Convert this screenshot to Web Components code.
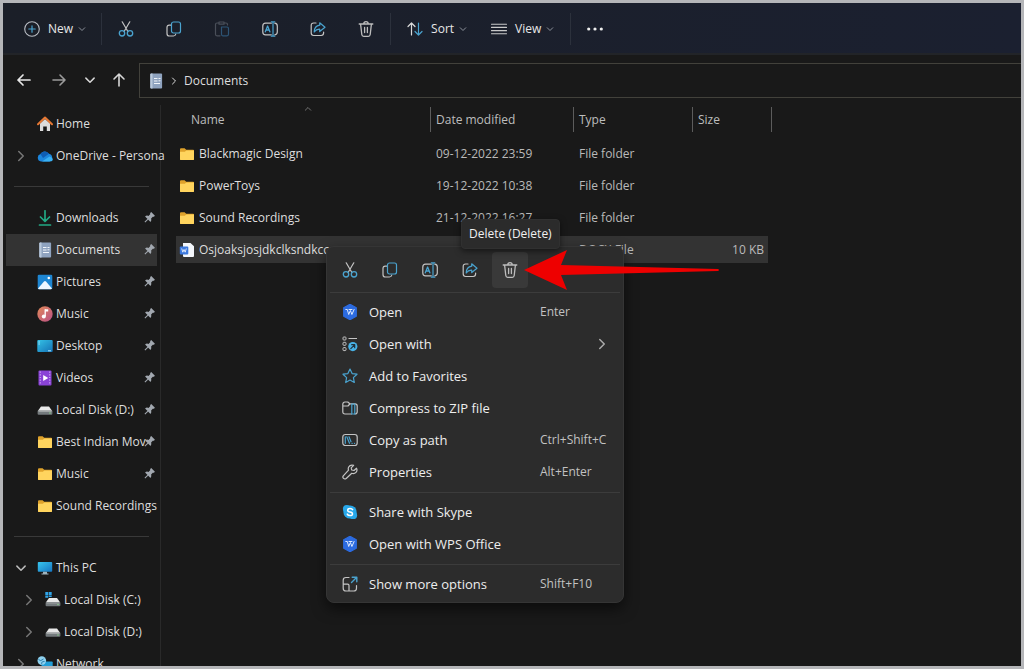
<!DOCTYPE html>
<html lang="en">
<head>
<meta charset="utf-8">
<title>Documents - File Explorer</title>
<style>
html, body { margin: 0; height: 100%; }
body { background: #b5b6b9; color: #dedede; font: 12px/16px "Open Sans", "Noto Sans", sans-serif; overflow: hidden; }
</style>
</head>
<body>
<file-explorer></file-explorer>
<script>
const INK = '#c4c4c4', BLUE = '#4aa3cf';
const folder = '<path d="M1 3.2q0-1 1-1h3.6l1.6 1.6h7q.8 0 .8.8v8.600q0 .8-.8.8H1.800q-.8 0-.8-.8z" fill="#dfa22b"/><path d="M1 5.800h4.800l1.600-1.300h7.600v8.700q0 .8-.8.8H1.800q-.8 0-.8-.8z" fill="#ffd45e"/>';
const drive = '<path d="M4 4.500h8l3.200 4.500H.8z" fill="#e8e8e8"/><rect x=".6" y="8.500" width="14.800" height="4.200" rx="1" fill="#747a7d"/><path d="M1.500 9.500h13" stroke="#b4b8b8" stroke-width=".7"/><circle cx="13" cy="11" r=".7" fill="#8be08b"/>';
const stroke = (d, c = INK, w = 1.2) => `<path d="${d}" fill="none" stroke="${c}" stroke-width="${w}" stroke-linecap="round" stroke-linejoin="round"/>`;
const wps = '<path d="M8 .3 14.300 3.700v8.600L8 15.700 1.700 12.300V3.700z" fill="#2c6be0" stroke="#2c6be0" stroke-width="1.200" stroke-linejoin="round"/>' + stroke('M3.800 5.500h1.500l1.400 5L8.400 6.500l1.500 4 2.200-5M7 5.500h3', '#dce9ff', 1);
const ICONS = {
  plus: '<circle cx="8" cy="8" r="7.300" fill="none" stroke="#b9bdc4" stroke-width="1.100"/>' + stroke('M8 4.800v6.400M4.800 8h6.400', BLUE),
  cut: stroke('M4.200 .8 9.900 10.500M11.800 .8 6.100 10.500') + `<circle cx="4" cy="12.300" r="2.700" fill="none" stroke="${BLUE}" stroke-width="1.300"/><circle cx="12" cy="12.300" r="2.700" fill="none" stroke="${BLUE}" stroke-width="1.300"/>`,
  copy: stroke('M4.700 4.200H3.200Q1 4.200 1 6.400v6Q1 15 3.400 15h4q2 0 2.400-2') + `<rect x="5.500" y="1" width="9" height="11" rx="2" fill="none" stroke="${BLUE}" stroke-width="1.200"/>`,
  paste: stroke('M6 14.800H3q-1.500 0-1.500-1.500V3.500Q1.500 2 3 2h1.500M10.500 2H12q1.500 0 1.500 1.500V4M5 1h5v2.200H5z', '#4a4f59') + stroke('M7.500 6h5.500q1.500 0 1.500 1.500v5.800q0 1.500-1.500 1.500H8.800q-1.300 0-1.300-1.500z', '#2d5475'),
  rename: stroke('M9.300 2.200H3.500Q.8 2.200.8 5v6q0 2.800 2.700 2.800h5.800M12.800 2.200q2.500.3 2.500 2.800v6q0 2.500-2.500 2.800') + stroke('M9.300 .8h3.500M9.300 15.200h3.500M11 .8v14.400', BLUE) + stroke('M3.300 10.800 5.600 5l2.300 5.800M4.200 9h3', BLUE, 1.3),
  share: stroke('M6 2H3.600Q1.200 2 1.200 4.400v7.700q0 2.400 2.400 2.400h7.600q2.400 0 2.400-2.400v-1') + stroke('M9.700 1.800 15 6.200l-5.300 4.300V8.200Q6.300 8 4.200 11 4.300 5 9.700 4.200z', BLUE),
  trash: stroke('M1.200 3h13.600M5.800 2.900Q5.800 .7 8 .7t2.200 2.200M2.600 3.200l1.200 10.300q.2 1.800 1.900 1.800h4.600q1.700 0 1.900-1.800l1.200-10.300M6.600 6.500v5M9.400 6.500v5', '#bdbdbd', 1.3),
  sort: stroke('M4.500 14V2M1 5.500 4.500 2 8 5.500', '#dadada') + stroke('M11.500 2v12M8 10.500l3.500 3.500 3.500-3.500', BLUE),
  view: stroke('M.5 3.200h15M.5 6.400h15M.5 9.600h15M.5 12.800h15', '#c9c9c9', 1.1),
  dots: '<g fill="#eee"><circle cx="1.700" cy="8" r="1.600"/><circle cx="8" cy="8" r="1.600"/><circle cx="14.300" cy="8" r="1.600"/></g>',
  down: stroke('M2.500 5.500 8 11l5.500-5.500', 'currentColor', 2),
  right: stroke('M5 2l6 6-6 6', 'currentColor', 2),
  up: stroke('M2.500 10.500 8 5l5.500 5.500', 'currentColor', 1.6),
  back: stroke('M14 8H2M7 3 2 8 7 13', '#e6e6e6', 1.7),
  forward: stroke('M2 8h12M9 3 14 8 9 13', '#9b9b9b', 1.6),
  upward: stroke('M8 14V2M3 7 8 2 13 7', '#d6d6d6', 1.6),
  home: '<path d="M3 7.500 8 3l5 4.500V15H9.800v-4.500H6.200V15H3z" fill="#dcdcdc"/><path d="M1 8.200 8 1.500l7 6.700" fill="none" stroke="#e67834" stroke-width="2" stroke-linecap="round" stroke-linejoin="round"/>',
  cloud: '<path d="M4 13.500a3.800 3.800 0 0 1-.5-7.400A5 5 0 0 1 12 5.800a4 4 0 0 1 .5 7.700z" fill="#1c86dd"/><path d="M3.500 6.100A5 5 0 0 1 12 5.800L6 10z" fill="#0f5db4"/><path d="M5 13.500 12.500 8.500q3.300 1 3.300 2.500 0 2.500-3 2.500z" fill="#39b0f2"/>',
  download: stroke('M8 .8v10.500M3.500 7 8 11.500 12.500 7M2.500 15h11', '#22a884', 1.7),
  doc: '<rect x="2.300" y=".5" width="11.800" height="15" rx="1" fill="#8fa3bf"/><path d="M2.300 1.500q0-1 1-1h1.200v15H3.300q-1 0-1-1z" fill="#b9c9dc"/><path d="M6 5.500h3.500M6 8h3.500M6 10.500h6M10.500 5.500H12.500M10.500 7.800h2" stroke="#f1f5fa" stroke-width="1"/>',
  picture: '<rect x=".7" y=".7" width="14.600" height="14.600" rx="1.300" fill="#1e86d2"/><path d="M1 14.500 7 7.500q1-1 2 0l6 7q-.5.800-1.300.8H2q-.7 0-1-.8z" fill="#eef7ff"/><circle cx="11.800" cy="4" r="1.300" fill="#fff"/>',
  music: '<defs><linearGradient id="m" x2="1" y2="1"><stop stop-color="#e28a58"/><stop offset="1" stop-color="#b94f86"/></linearGradient></defs><circle cx="8" cy="8" r="7.700" fill="url(#m)"/><path d="M8.200 3.300v7" stroke="#fff" stroke-width="1.300"/><path d="M8.200 3.300h3v2.200h-3z" fill="#fff"/><circle cx="6.800" cy="10.400" r="2" fill="#fff"/>',
  desktop: '<defs><linearGradient id="d" x2="1" y2="1"><stop stop-color="#35c2e6"/><stop offset="1" stop-color="#1471b5"/></linearGradient></defs><rect x=".3" y="2" width="15.400" height="12" rx="1" fill="url(#d)"/><path d="M1.500 4h1.300M1.500 6h1.300M11 12.800h3" stroke="#bdeeff" stroke-width=".9"/>',
  video: '<rect x="1.500" y=".5" width="13" height="15" rx="1" fill="#8a43d6"/><path d="M3.300 1.500v13M12.700 1.500v13" stroke="#cda6f5" stroke-width="1.200" stroke-dasharray="1.200 1.500"/><path d="M6.200 4.900v6.200L11.200 8z" fill="#fff"/>',
  drive,
  drivec: '<g transform="translate(0 1.500)">' + drive + '</g><g fill="#2fa4e8"><path d="M.3 0h2.900v2.900H.3zM3.800 0h2.900v2.900H3.800zM.3 3.500h2.900v2.300H.3zM3.800 3.500h2.900v1.500H3.800z"/></g>',
  folder,
  pc: '<defs><linearGradient id="p" x2="1" y2="1"><stop stop-color="#38c6ee"/><stop offset="1" stop-color="#1676c4"/></linearGradient></defs><rect x=".8" y="2" width="14.400" height="9.800" rx=".8" fill="url(#p)"/><path d="M6 11.800h4v1.700h1.500v1h-7v-1H6z" fill="#9fb3bd"/>',
  network: '<rect x="4.500" y="5.500" width="11.200" height="8.500" rx=".8" fill="#229ed8"/><circle cx="4.800" cy="4.600" r="4.300" fill="#8fd1ee"/><path d="M1.500 3.500q2 2.500 5-.5M5 8.500q-1.500-3 2.500-3" fill="none" stroke="#2b7fb0" stroke-width="1"/>',
  word: '<path d="M4 1h7.500L15 4.300V14q0 1-1 1H5q-1 0-1-1z" fill="#f3f6fb"/><rect x=".8" y="4.500" width="8.500" height="8" rx="1" fill="#3b78dd"/>' + stroke('M2.800 6.800l1 3.400L5 7.500l1.200 2.700 1-3.400', '#fff', .8),
  pin: '<g transform="rotate(45 8 8)" fill="#a2a8b0"><path d="M4.500 .3h7v2l-1 1v3.200q2.600 1.200 2.600 3.800H2.900Q2.900 7.700 5.500 6.500V3.300l-1-1z"/><path d="M7.300 10h1.400v5.800H7.300z"/></g>',
  wps,
  openwith: '<g fill="none" stroke="#c4c4c4" stroke-width="1"><rect x="1" y="1" width="3" height="3" rx=".8"/><rect x="1" y="6.300" width="3" height="3" rx=".8"/><rect x="1" y="11.600" width="3" height="3" rx=".8"/><path d="M6.500 2.500h8.500"/></g><circle cx="10.800" cy="10.600" r="4.600" fill="#48b2e6"/>' + stroke('M8.800 12.600l3.800-3.800M9.700 8.700h3v3', '#20303a', 1.2),
  star: stroke('M8 1l2.100 4.600 4.900.6-3.600 3.400.9 4.900L8 12.100l-4.300 2.400.9-4.900L1 6.200l4.900-.6z', BLUE),
  zip: stroke('M9.500 14H3Q.8 14 .8 11.800V4.200Q.8 2 3 2h2.800l2 1.800H13q2.200 0 2.200 2.200v5.800Q15.200 14 13 14M1 6h5l1.800-2') + stroke('M9.800 4v10h3V4z', BLUE),
  path: '<rect x=".8" y="2.500" width="14.400" height="11" rx="2.500" fill="none" stroke="#c4c4c4" stroke-width="1.200"/>' + stroke('M3.300 4.800v6.500M4.800 4.800l2.700 6.500M7 4.800l2 5M10 11.300h.2M12.400 11.300h.2', BLUE, 1.2),
  wrench: stroke('M14.500 4.200 12 6.500 9.700 6l-.5-2.200L11.600 1.300Q8.200.3 6.700 3q-.8 1.500-.2 3.200L1.300 11.800q-1 1.500.2 2.600t2.700.1L9.800 9.300q2.500.8 4.200-1t.5-4.100z'),
  skype: '<g fill="#28a8ea"><circle cx="8" cy="8" r="6.600"/><circle cx="4.800" cy="4.800" r="3.900"/><circle cx="11.200" cy="11.200" r="3.900"/></g>' + stroke('M10.600 5.700Q10 4.500 8 4.500q-2.300 0-2.300 1.700T8 8q2.500.3 2.500 1.900T8 11.500q-2.100 0-2.700-1.400', '#fff', 1.5),
  more: stroke('M7 1.500H4Q1.200 1.500 1.200 4.300v7.900Q1.200 15 4 15h7.700q2.800 0 2.800-2.800V9.500M1.400 8.200h4.200q1.400 0 1.400 1.400v5') + stroke('M9.500 6.500l5-5M10.200 1.200h4.600v4.600', BLUE, 1.4)
};

/* Builds an element class whose shadow root is filled from a render function. */
const define = (tag, render) => customElements.define(tag, class extends HTMLElement {
  connectedCallback() {
    if (this.shadowRoot) return;
    const t = document.createElement('template');
    t.innerHTML = render(this);
    this.attachShadow({ mode: 'open' }).append(t.content.cloneNode(true));
  }
});
const BTN = 'button{all:unset;box-sizing:border-box;display:flex;align-items:center;cursor:default}button:focus-visible{outline:1px solid #888}';

define('fx-icon', el => `<style>:host{display:block;flex:none;width:16px;height:16px}:host([size="12"]){width:12px;height:12px}:host([size="8"]){width:8px;height:8px}svg{display:block;width:100%;height:100%}</style>
<svg viewBox="0 0 16 16" aria-hidden="true">${ICONS[el.getAttribute('name')]}</svg>`);

define('tool-button', el => `<style>:host{display:block}${BTN}
button{height:36px;justify-content:center;min-width:32px;font-weight:500}
.label{margin:0 5px 0 8px}.chev{color:#8d929b}</style>
<button type="button" aria-label="${el.getAttribute('label') || el.textContent}"><fx-icon name="${el.getAttribute('icon')}"></fx-icon>${el.hasAttribute('menu') ? '<span class="label"><slot></slot></span><fx-icon class="chev" name="down" size="8"></fx-icon>' : ''}</button>`);

define('tool-bar', () => `<style>:host{display:flex;align-items:center;box-sizing:border-box;height:52px;padding:2px 0 0 21px;border-bottom:2px solid #222428;background:linear-gradient(90deg,#1b1f28,#1b2030);color:#e8e8e8}
i{width:1px;height:32px;background:#2c313c}.icons{display:flex;gap:16px;margin:0 8px}.menus{display:flex;gap:24px;margin:0 16px}.more{margin-left:8px}i.first{margin-left:15px}</style>
<tool-button icon="plus" menu>New</tool-button><i class="first"></i>
<div class="icons"><tool-button icon="cut" label="Cut"></tool-button><tool-button icon="copy" label="Copy"></tool-button><tool-button icon="paste" label="Paste"></tool-button><tool-button icon="rename" label="Rename"></tool-button><tool-button icon="share" label="Share"></tool-button><tool-button icon="trash" label="Delete"></tool-button></div>
<i></i><div class="menus"><tool-button icon="sort" menu>Sort</tool-button><tool-button icon="view" menu>View</tool-button></div>
<i></i><tool-button class="more" icon="dots" label="See more"></tool-button>`);

define('address-row', () => `<style>:host{display:flex;align-items:center;gap:12px;height:50px;padding-left:11px}${BTN}
button{justify-content:center;height:32px;width:20px}nav{display:flex;gap:15px}nav .s{width:12px}nav .u{width:16px}.s{color:#d8d8d8}
.box{flex:1;display:flex;align-items:center;gap:6px;box-sizing:border-box;height:35px;padding:1px 0 0 8px;border:1px solid #42413b;border-right:0}
a{color:inherit;text-decoration:none}</style>
<nav aria-label="History"><button type="button" aria-label="Back"><fx-icon name="back"></fx-icon></button><button type="button" aria-label="Forward"><fx-icon name="forward"></fx-icon></button><button type="button" class="s" aria-label="Recent"><fx-icon name="down" size="12"></fx-icon></button><button type="button" class="u" aria-label="Up"><fx-icon name="upward"></fx-icon></button></nav>
<div class="box"><fx-icon name="doc"></fx-icon><fx-icon name="right" size="8"></fx-icon><a href="#documents">Documents</a></div>`);

define('nav-item', el => `<style>:host{display:block}
a{display:flex;align-items:center;height:32px;box-sizing:border-box;padding:0 2px 0 9px;color:inherit;text-decoration:none}
:host([nested]) a{padding-left:17px}:host([selected]) a{background:#333}
.chev{width:10px;margin-right:12px;color:#777}.chev.open{color:#bbb}.label{flex:1;min-width:0;margin-left:3px;white-space:nowrap}</style>
<a href="#"><span class="chev ${el.getAttribute('chev') === 'down' ? 'open' : ''}">${el.hasAttribute('chev') ? `<fx-icon name="${el.getAttribute('chev')}" size="12"></fx-icon>` : ''}</span><fx-icon name="${el.getAttribute('icon')}"></fx-icon><span class="label"><slot></slot></span>${el.hasAttribute('pinned') ? '<fx-icon name="pin" size="12"></fx-icon>' : ''}</a>`);

define('nav-pane', () => `<style>:host{display:block;box-sizing:border-box;width:158px;flex:none;padding:3px 3px 0;border-right:1px solid #292929}
hr{height:1px;margin:14px 8px 15px;border:0;background:#393939}</style>
<nav aria-label="Folders"><nav-item icon="home">Home</nav-item><nav-item icon="cloud" chev="right">OneDrive - Persona</nav-item><hr>
<nav-item icon="download" pinned>Downloads</nav-item><nav-item icon="doc" pinned selected>Documents</nav-item><nav-item icon="picture" pinned>Pictures</nav-item><nav-item icon="music" pinned>Music</nav-item><nav-item icon="desktop" pinned>Desktop</nav-item><nav-item icon="video" pinned>Videos</nav-item><nav-item icon="drive" pinned>Local Disk (D:)</nav-item><nav-item icon="folder" pinned>Best Indian Mov</nav-item><nav-item icon="folder" pinned>Music</nav-item><nav-item icon="folder">Sound Recordings</nav-item><hr>
<nav-item icon="pc" chev="down">This PC</nav-item><nav-item icon="drivec" chev="right" nested>Local Disk (C:)</nav-item><nav-item icon="drive" chev="right" nested>Local Disk (D:)</nav-item><nav-item icon="network" chev="right">Network</nav-item></nav>`);

const FILES = [['folder', 'Blackmagic Design', '09-12-2022 23:59', 'File folder', ''], ['folder', 'PowerToys', '19-12-2022 10:38', 'File folder', ''], ['folder', 'Sound Recordings', '21-12-2022 16:27', 'File folder', ''], ['word', 'Osjoaksjosjdkclksndkccas', '', 'DOCX File', '10 KB']];
define('file-list', () => `<style>:host{display:block;flex:1;min-width:0;padding:0 0 0 15px}
table{table-layout:fixed;width:596px;border-collapse:separate;border-spacing:0 5px;margin-top:-3px}
th{height:28px;padding:0;text-align:left;vertical-align:top;font-weight:400;color:#bdbdbd;position:relative}
th div{box-sizing:border-box;height:25px;padding:5px 0 0 5px;border-right:1px solid #5c5c5c}th:first-child div{padding-left:15px}
th fx-icon{position:absolute;left:128px;top:-2px;color:#888}
td{height:27px;box-sizing:border-box;padding:1px 0 0 5px;white-space:nowrap;color:#bababa}
td:first-child{padding-left:3px;color:#dedede}td:last-child{text-align:right;padding-right:4px;border-right:4px solid transparent;background-clip:padding-box}
td span{display:flex;align-items:center;gap:4px}tr.sel td{background-color:#333}</style>
<table><colgroup><col style="width:255px"><col style="width:143px"><col style="width:119px"><col style="width:79px"></colgroup>
<thead><tr><th><div>Name</div><fx-icon name="up" size="8"></fx-icon></th><th><div>Date modified</div></th><th><div>Type</div></th><th><div>Size</div></th></tr></thead>
<tbody>${FILES.map(f => `<tr${f[4] ? ' class="sel"' : ''}><td><span><fx-icon name="${f[0]}"></fx-icon>${f[1]}</span></td><td>${f[2]}</td><td>${f[3]}</td><td>${f[4]}</td></tr>`).join('')}</tbody></table>`);

define('menu-item', el => `<style>:host{display:block}${BTN}
button{width:100%;height:32px;padding:0 15px;font-size:13px;font-weight:500;color:#eee}
.label{flex:1;margin-left:11px;white-space:nowrap}.key{width:68px;font-size:12px;font-weight:400;color:#c2c2c2;white-space:nowrap}fx-icon.sub{width:12px;height:12px;color:#aaa}</style>
<button type="button" role="menuitem"><fx-icon name="${el.getAttribute('icon')}"></fx-icon><span class="label"><slot></slot></span>${el.hasAttribute('key') ? `<span class="key">${el.getAttribute('key')}</span>` : ''}${el.hasAttribute('sub') ? '<fx-icon class="sub" name="right"></fx-icon>' : ''}</button>`);

define('context-menu', () => `<style>:host{display:block;box-sizing:border-box;width:298px;padding-bottom:2px;border:1px solid #353535;border-radius:8px;background:#2c2c2c;box-shadow:0 6px 14px #0008}${BTN}
.quick{display:flex;gap:4px;padding:5px 5px 0}.quick button{width:36px;height:36px;justify-content:center;border-radius:4px}.quick button.hot{background:#393939}
hr{height:1px;margin:4px 3px 3px;border:0;background:#3c3c3c}</style>
<div role="menu"><div class="quick">${[['cut', 'Cut'], ['copy', 'Copy'], ['rename', 'Rename'], ['share', 'Share'], ['trash', 'Delete']].map(([i, l]) => `<button type="button" aria-label="${l}"${i === 'trash' ? ' class="hot"' : ''}><fx-icon name="${i}"></fx-icon></button>`).join('')}</div><hr>
<menu-item icon="wps" key="Enter">Open</menu-item><menu-item icon="openwith" sub>Open with</menu-item><menu-item icon="star">Add to Favorites</menu-item><menu-item icon="zip">Compress to ZIP file</menu-item><menu-item icon="path" key="Ctrl+Shift+C">Copy as path</menu-item><menu-item icon="wrench" key="Alt+Enter">Properties</menu-item><hr>
<menu-item icon="skype">Share with Skype</menu-item><menu-item icon="wps">Open with WPS Office</menu-item><hr>
<menu-item icon="more" key="Shift+F10">Show more options</menu-item></div>`);

define('tool-tip', () => `<style>:host{display:block;box-sizing:border-box;padding:6px 7px;border:1px solid #303030;border-radius:4px;background:#2b2b2b;color:#f0f0f0;white-space:nowrap;box-shadow:0 2px 6px #0008}</style><slot></slot>`);

define('pointer-arrow', () => `<style>:host{display:block;width:196px;height:40px}svg{display:block}</style><svg width="196" height="40" viewBox="0 0 196 40" aria-hidden="true"><path d="M0 20 43 0 37 15 194 19q2 1 0 2L37 25l6 15z" fill="#ee0000"/></svg>`);

define('file-explorer', () => `<style>:host{display:flex;flex-direction:column;box-sizing:border-box;height:100vh;border:3px solid #b5b6b9;background:#191919;position:relative;overflow:hidden}
main{display:flex;flex:1;min-height:0}
context-menu{position:absolute;left:323px;top:243px}tool-tip{position:absolute;left:458px;top:216px}pointer-arrow{position:absolute;left:521px;top:247px}</style>
<tool-bar></tool-bar><address-row></address-row><main><nav-pane></nav-pane><file-list></file-list></main>
<context-menu></context-menu><tool-tip role="tooltip">Delete (Delete)</tool-tip><pointer-arrow></pointer-arrow>`);
</script>
</body>
</html>
